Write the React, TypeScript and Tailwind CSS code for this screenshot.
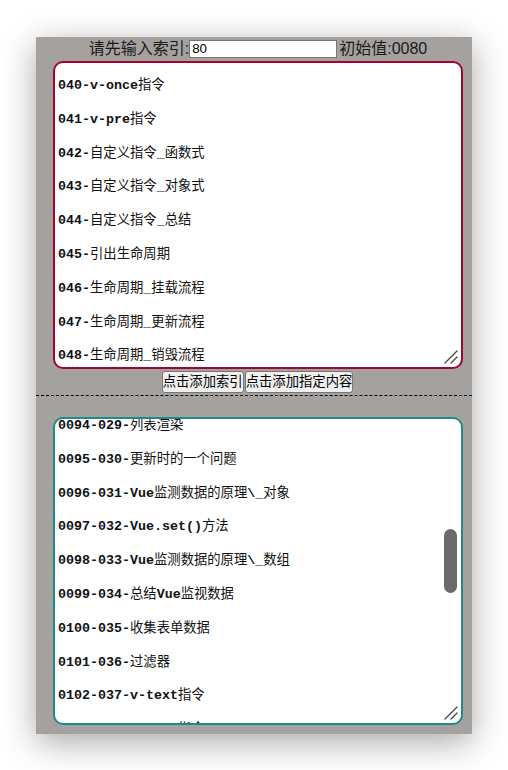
import React from 'react';

const topItems = [
  '040-v-once指令',
  '041-v-pre指令',
  '042-自定义指令_函数式',
  '043-自定义指令_对象式',
  '044-自定义指令_总结',
  '045-引出生命周期',
  '046-生命周期_挂载流程',
  '047-生命周期_更新流程',
  '048-生命周期_销毁流程',
];

const bottomItems = [
  '0094-029-列表渲染',
  '0095-030-更新时的一个问题',
  '0096-031-Vue监测数据的原理\\_对象',
  '0097-032-Vue.set()方法',
  '0098-033-Vue监测数据的原理\\_数组',
  '0099-034-总结Vue监视数据',
  '0100-035-收集表单数据',
  '0101-036-过滤器',
  '0102-037-v-text指令',
  '0103-038-v-html指令',
];

// latin parts bold, chinese parts regular
function Line({ text }: { text: string }) {
  const parts = text.split(/([\u3400-\u9fff]+)/).filter(Boolean);
  return (
    <>
      {parts.map((p, i) =>
        /[\u3400-\u9fff]/.test(p) ? (
          <span key={i} className="font-normal">{p}</span>
        ) : (
          <span key={i} className="font-bold">{p}</span>
        )
      )}
    </>
  );
}

function ResizeGrip() {
  return (
    <svg className="absolute right-[2px] bottom-[2px]" width="16" height="16" viewBox="0 0 16 16">
      <path d="M2 14 L14 2" stroke="#444" strokeWidth={1.3} strokeLinecap="round" />
      <path d="M8 14 L14 8" stroke="#444" strokeWidth={1.3} strokeLinecap="round" />
    </svg>
  );
}

function TextBox({ items, border, offset, scrollbar }: { items: string[]; border: string; offset: string; scrollbar?: boolean }) {
  return (
    <div className={`relative ml-[17px] w-[410px] h-[308px] bg-white border-2 rounded-[10px] overflow-hidden ${border}`}>
      <div
        className={`pl-[3px] text-[13.33px] leading-[16.9px] text-[#111] ${offset}`}
        style={{ fontFamily: '"Liberation Mono", "Noto Sans CJK SC", monospace' }}
      >
        {items.map((item) => (
          <div key={item} className="mb-[16.9px] whitespace-pre">
            <Line text={item} />
          </div>
        ))}
      </div>
      {scrollbar && (
        <div className="absolute right-[4px] top-[110px] w-[13px] h-[64px] rounded-full bg-[#6b6b6b]" />
      )}
      <ResizeGrip />
    </div>
  );
}

export default function App() {
  const sans = { fontFamily: '"Liberation Sans", "Noto Sans CJK SC", sans-serif' };
  return (
    <div className="min-h-screen bg-white pt-[37px]" style={sans}>
      <div className="ml-[36px] w-[436px] h-[697px] bg-[#a5a19e] shadow-[0_8px_32px_rgba(0,0,0,0.35)]">
        {/* Header */}
        <div className="h-[24px] flex items-center justify-center text-[16px] text-[#1a1a1a] pl-[8px]">
          <span>请先输入索引:</span>
          <input
            value="80"
            readOnly
            className="w-[148px] h-[18px] bg-white border border-[#767676] px-[2px] text-[13.33px] text-black outline-none"
          />
          <span className="ml-[2px]">初始值:0080</span>
        </div>

        {/* Top list */}
        <TextBox items={topItems} border="border-[#a3052e]" offset="pt-[15px]" />

        {/* Buttons */}
        <div className="mt-[2px] h-[22px] flex justify-center pl-[7px] text-[13.33px]">
          <button className="h-[22px] px-0 bg-[#efefef] border border-[#767676] rounded-[3px] text-black">
            点击添加索引
          </button>
          <button className="h-[22px] px-0 ml-[1px] bg-[#efefef] border border-[#767676] rounded-[3px] text-black">
            点击添加指定内容
          </button>
        </div>

        <div className="mt-[2px] border-t border-dashed border-black" />

        {/* Bottom list */}
        <div className="mt-[21px]">
          <TextBox items={bottomItems} border="border-[#1b8c88]" offset="-mt-[1px]" scrollbar />
        </div>
      </div>
    </div>
  );
}
